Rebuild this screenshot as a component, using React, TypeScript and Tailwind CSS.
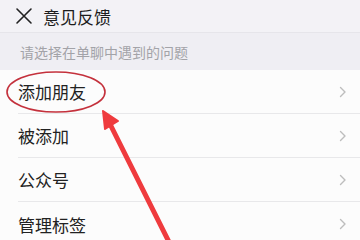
import React from 'react';

const items = ['添加朋友', '被添加', '公众号', '管理标签'];

function Chevron() {
  return (
    <svg width="8" height="12" viewBox="0 0 8 12" fill="none" className="shrink-0">
      <path d="M1.5 1.5L6 6L1.5 10.5" stroke="#bdbdbd" strokeWidth="1.4" strokeLinecap="round" strokeLinejoin="round" />
    </svg>
  );
}

export default function App() {
  return (
    <div
      className="relative w-[360px] h-[240px] overflow-hidden bg-[#fcfcfc]"
      style={{ fontFamily: '"Noto Sans CJK SC", "Noto Sans", sans-serif' }}
    >
      {/* Header */}
      <div className="h-[33px] flex items-center gap-[10px] px-[15px] bg-[#f3f2f6] border-b border-[#e6e5ea]">
        <svg width="18" height="18" viewBox="0 0 18 18" fill="none">
          <path d="M2 2L16 16M16 2L2 16" stroke="#222" strokeWidth="1.6" strokeLinecap="round" />
        </svg>
        <span className="text-[17px] leading-none text-[#1c1c1c]">意见反馈</span>
      </div>

      {/* Section hint */}
      <div className="h-[37px] flex items-center px-[20px] bg-[#efeef3]">
        <span className="text-[14px] leading-none text-[#a3a3a8]">请选择在单聊中遇到的问题</span>
      </div>

      {/* List */}
      <div className="flex flex-col">
        {items.map((label, i) => (
          <div key={label} className="h-[44px] flex items-center pl-[18px]">
            <div
              className={`flex-1 h-full flex items-center justify-between pr-[13px] ${
                i < items.length - 1 ? 'border-b border-[#e8e8ea]' : ''
              }`}
            >
              <span className="text-[17px] leading-none text-[#222]">{label}</span>
              <Chevron />
            </div>
          </div>
        ))}
      </div>

      {/* Annotation overlay */}
      <svg className="absolute inset-0 pointer-events-none" width="360" height="240" viewBox="0 0 360 240">
        <ellipse cx="56" cy="92" rx="49" ry="20" fill="none" stroke="#c4313c" strokeWidth="1.6" />
        <line x1="109" y1="122" x2="170" y2="244" stroke="#ef3b3e" strokeWidth="5" strokeLinecap="round" />
        <polygon points="103,111 118,121 105,129" fill="#ef3b3e" stroke="#ef3b3e" strokeWidth="2" strokeLinejoin="round" />
      </svg>
    </div>
  );
}
